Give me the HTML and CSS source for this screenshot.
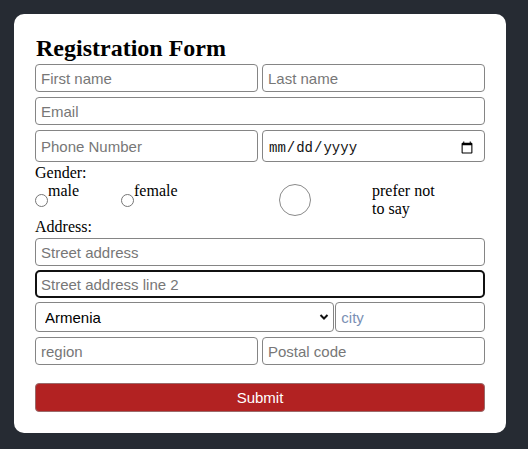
FILE: index.html
```html
<!DOCTYPE html>
<html lang="en">
<head>
<meta charset="utf-8">
<title>Registration Form</title>
<link rel="stylesheet" href="styles.css">
</head>
<body>
<form class="card">
  <h2 class="title">Registration Form</h2>
  <div class="row row-names">
    <input class="field" type="text" placeholder="First name">
    <input class="field" type="text" placeholder="Last name">
  </div>
  <input class="field row-email" type="email" placeholder="Email">
  <div class="row row-phone">
    <input class="field" type="tel" placeholder="Phone Number">
    <input class="field date" type="date">
  </div>
  <div class="label gender-label">Gender:</div>
  <div class="radios">
    <input class="radio" type="radio" name="gender" id="g-male">
    <label class="opt opt-male" for="g-male">male</label>
    <input class="radio" type="radio" name="gender" id="g-female">
    <label class="opt opt-female" for="g-female">female</label>
    <input class="radio radio-big" type="radio" name="gender" id="g-none">
    <label class="opt opt-none" for="g-none">prefer not to say</label>
  </div>
  <div class="label">Address:</div>
  <input class="field street" type="text" placeholder="Street address">
  <input class="field street2 is-focused" type="text" placeholder="Street address line 2">
  <div class="row row-country">
    <div class="select-wrap">
      <select class="field select">
        <option>Armenia</option>
      </select>
      <svg class="chev" width="10" height="8" viewBox="0 0 10 8"><path d="M1.5 2 L5 5.5 L8.5 2" fill="none" stroke="#111" stroke-width="2"/></svg>
    </div>
    <input class="field city" type="text" placeholder="city">
  </div>
  <div class="row row-region">
    <input class="field" type="text" placeholder="region">
    <input class="field" type="text" placeholder="Postal code">
  </div>
  <button class="submit" type="button">Submit</button>
</form>
</body>
</html>
```
FILE: styles.css
```css
html, body {
  margin: 0;
  padding: 0;
}
body {
  background: #262b33;
  font-family: "Liberation Serif", "Times New Roman", serif;
  font-size: 16px;
  color: #000;
  height: 449px;
  overflow: hidden;
}
.card {
  box-sizing: border-box;
  margin: 14px 0 0 14px;
  width: 492px;
  background: #fff;
  border-radius: 10px;
  padding: 21px 21px 21px 21px;
  display: flex;
  flex-direction: column;
}
.title {
  margin: 0 0 3px 0;
  font-size: 24px;
  line-height: 26px;
  font-weight: bold;
  padding-left: 1px;
}
.row {
  display: grid;
  grid-template-columns: 1fr 1fr;
  column-gap: 4px;
}
.field {
  box-sizing: border-box;
  margin: 0;
  height: 28px;
  padding: 0 5px;
  border: 1px solid #858585;
  border-radius: 4px;
  font-family: "Liberation Sans", Arial, sans-serif;
  font-size: 15px;
  color: #000;
  background: #fff;
  outline: none;
  min-width: 0;
  width: 100%;
}
.field::placeholder {
  color: #777;
}
.row-email { margin-top: 5px; }
.row-phone { margin-top: 5px; }
.row-phone .field { height: 32px; }
.date {
  font-family: "Liberation Mono", "DejaVu Sans Mono", monospace;
  font-size: 14px;
  color: #111;
  padding: 3px 8px 0 5px;
}
.label {
  line-height: 18px;
}
.gender-label { margin-top: 2px; }
.radios {
  display: flex;
  align-items: center;
  line-height: 18px;
}
.radio {
  appearance: none;
  -webkit-appearance: none;
  box-sizing: border-box;
  margin: 0;
  width: 13px;
  height: 13px;
  border: 1px solid #767676;
  border-radius: 50%;
  background: #fff;
  flex: none;
  position: relative;
  top: 0.5px;
}
.radio-big {
  width: 32px;
  height: 32px;
  border-color: #8a8a8a;
  top: 0;
}
.opt {
  align-self: flex-start;
  flex: none;
}
.opt-male { width: 73px; }
.opt-female { width: 145px; }
.opt-none {
  width: 72px;
  margin-left: 61px;
}
.street { margin-top: 2px; }
.street2 { margin-top: 4px; }
.is-focused {
  border: 2px solid #111;
  padding-left: 4px;
  border-radius: 5px;
}
.row-country {
  margin-top: 4px;
  grid-template-columns: 2fr 1fr;
  column-gap: 1px;
}
.row-country .field { height: 30px; }
.select-wrap {
  position: relative;
}
.select {
  appearance: none;
  -webkit-appearance: none;
  padding-left: 9px;
}
.chev {
  position: absolute;
  right: 5px;
  top: 11px;
  pointer-events: none;
}
.city::placeholder { color: #7a90b4; }
.row-region { margin-top: 5px; }
.submit {
  margin-top: 18px;
  height: 29px;
  border: 1px solid #9a6a6a;
  border-radius: 4px;
  background: #b22222;
  color: #fff;
  font-family: "Liberation Sans", Arial, sans-serif;
  font-size: 15px;
  padding: 0;
}
```
